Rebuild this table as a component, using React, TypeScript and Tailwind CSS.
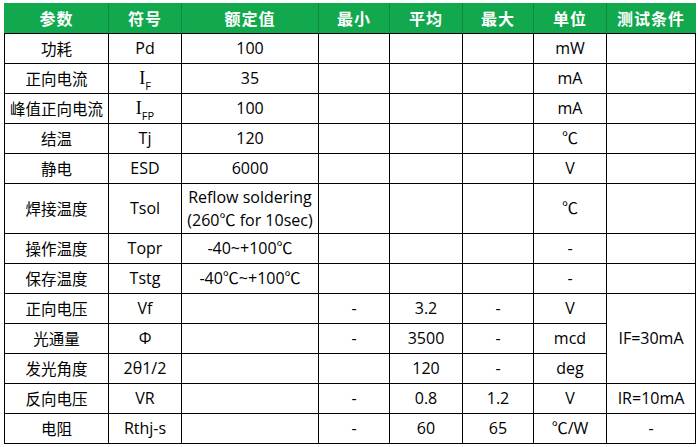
const cols = [104, 73, 137, 71, 73, 71, 73, 89];

const head = ["参数", "符号", "额定值", "最小", "平均", "最大", "单位", "测试条件"];

const Sub = ({ base, sub }: { base: string; sub: string }) => (
  <span>
    <span className="font-['Liberation_Serif',serif] text-[18px]">{base}</span>
    <sub className="text-[11px] align-[-3px]">{sub}</sub>
  </span>
);

type Row = {
  name: string;
  sym: React.ReactNode;
  rated?: React.ReactNode;
  min?: string;
  avg?: string;
  max?: string;
  unit?: string;
  cond?: string | null;
  span?: number;
  tall?: boolean;
};

const rows: Row[] = [
  { name: "功耗", sym: "Pd", rated: "100", unit: "mW", cond: "" },
  { name: "正向电流", sym: <Sub base="I" sub="F" />, rated: "35", unit: "mA", cond: "" },
  { name: "峰值正向电流", sym: <Sub base="I" sub="FP" />, rated: "100", unit: "mA", cond: "" },
  { name: "结温", sym: "Tj", rated: "120", unit: "℃", cond: "" },
  { name: "静电", sym: "ESD", rated: "6000", unit: "V", cond: "" },
  {
    name: "焊接温度",
    sym: "Tsol",
    rated: (
      <>
        Reflow soldering
        <br />
        (260℃ for 10sec)
      </>
    ),
    unit: "℃",
    cond: "",
    tall: true,
  },
  { name: "操作温度", sym: "Topr", rated: "-40~+100℃", unit: "-", cond: "" },
  { name: "保存温度", sym: "Tstg", rated: "-40℃~+100℃", unit: "-", cond: "" },
  { name: "正向电压", sym: "Vf", min: "-", avg: "3.2", max: "-", unit: "V", cond: "IF=30mA", span: 3 },
  { name: "光通量", sym: "Φ", min: "-", avg: "3500", max: "-", unit: "mcd", cond: null },
  { name: "发光角度", sym: "2θ1/2", avg: "120", max: "-", unit: "deg", cond: null },
  { name: "反向电压", sym: "VR", min: "-", avg: "0.8", max: "1.2", unit: "V", cond: "IR=10mA" },
  { name: "电阻", sym: "Rthj-s", min: "-", avg: "60", max: "65", unit: "℃/W", cond: "-" },
];

const td = "border border-black text-center align-middle p-0 leading-[23px] whitespace-nowrap";

export default function App() {
  return (
    <div className="w-[698px] h-[447px] bg-white pl-[4px] pt-[3px] font-['Open_Sans','Noto_Sans_CJK_SC',sans-serif] text-[16px] text-black">
      <table className="border-collapse table-fixed w-[691px]">
        <colgroup>
          {cols.map((w, i) => (
            <col key={i} style={{ width: w }} />
          ))}
        </colgroup>
        <thead>
          <tr className="h-[30px] bg-[#12a84d]">
            {head.map((h, i) => (
              <th
                key={h}
                className={`border-t border-t-[#12a84d] border-b border-b-black border-x ${
                  i === 0 ? "border-l-[#12a84d]" : "border-l-[#0e8a3e]"
                } ${i === head.length - 1 ? "border-r-[#12a84d]" : "border-r-[#0e8a3e]"} text-white font-bold text-[16px] p-0 tracking-[1px]`}
              >
                {h}
              </th>
            ))}
          </tr>
        </thead>
        <tbody>
          {rows.map((r) => (
            <tr key={r.name} className={r.tall ? "h-[50px]" : "h-[30px]"}>
              <td className={`${td} font-['Noto_Sans_CJK_SC',sans-serif] text-[15.5px]`}>{r.name}</td>
              <td className={td}>{r.sym}</td>
              <td className={td}>{r.rated}</td>
              <td className={td}>{r.min}</td>
              <td className={td}>{r.avg}</td>
              <td className={td}>{r.max}</td>
              <td className={td}>{r.unit}</td>
              {r.cond !== null && (
                <td className={td} rowSpan={r.span ?? 1}>
                  {r.cond}
                </td>
              )}
            </tr>
          ))}
        </tbody>
      </table>
    </div>
  );
}
